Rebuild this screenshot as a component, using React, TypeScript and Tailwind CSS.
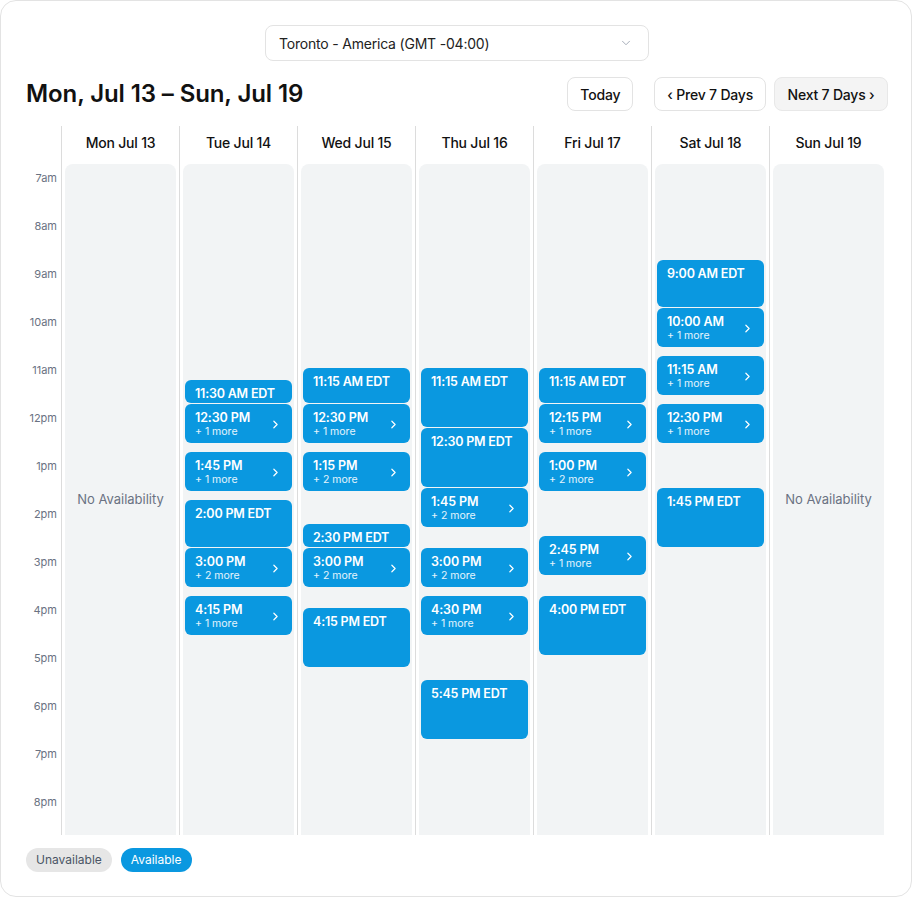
import React from 'react';
import { ChevronDown, ChevronRight } from 'lucide-react';

type Slot = { top: number; h: number; time: string; more?: string };

type Day = { label: string; slots: Slot[] | null };

const days: Day[] = [
  { label: 'Mon Jul 13', slots: null },
  {
    label: 'Tue Jul 14',
    slots: [
      { top: 216, h: 23, time: '11:30 AM EDT' },
      { top: 240, h: 39, time: '12:30 PM', more: '+ 1 more' },
      { top: 288, h: 39, time: '1:45 PM', more: '+ 1 more' },
      { top: 336, h: 47, time: '2:00 PM EDT' },
      { top: 384, h: 39, time: '3:00 PM', more: '+ 2 more' },
      { top: 432, h: 39, time: '4:15 PM', more: '+ 1 more' },
    ],
  },
  {
    label: 'Wed Jul 15',
    slots: [
      { top: 204, h: 35, time: '11:15 AM EDT' },
      { top: 240, h: 39, time: '12:30 PM', more: '+ 1 more' },
      { top: 288, h: 39, time: '1:15 PM', more: '+ 2 more' },
      { top: 360, h: 23, time: '2:30 PM EDT' },
      { top: 384, h: 39, time: '3:00 PM', more: '+ 2 more' },
      { top: 444, h: 59, time: '4:15 PM EDT' },
    ],
  },
  {
    label: 'Thu Jul 16',
    slots: [
      { top: 204, h: 59, time: '11:15 AM EDT' },
      { top: 264, h: 59, time: '12:30 PM EDT' },
      { top: 324, h: 39, time: '1:45 PM', more: '+ 2 more' },
      { top: 384, h: 39, time: '3:00 PM', more: '+ 2 more' },
      { top: 432, h: 39, time: '4:30 PM', more: '+ 1 more' },
      { top: 516, h: 59, time: '5:45 PM EDT' },
    ],
  },
  {
    label: 'Fri Jul 17',
    slots: [
      { top: 204, h: 35, time: '11:15 AM EDT' },
      { top: 240, h: 39, time: '12:15 PM', more: '+ 1 more' },
      { top: 288, h: 39, time: '1:00 PM', more: '+ 2 more' },
      { top: 372, h: 39, time: '2:45 PM', more: '+ 1 more' },
      { top: 432, h: 59, time: '4:00 PM EDT' },
    ],
  },
  {
    label: 'Sat Jul 18',
    slots: [
      { top: 96, h: 47, time: '9:00 AM EDT' },
      { top: 144, h: 39, time: '10:00 AM', more: '+ 1 more' },
      { top: 192, h: 39, time: '11:15 AM', more: '+ 1 more' },
      { top: 240, h: 39, time: '12:30 PM', more: '+ 1 more' },
      { top: 324, h: 59, time: '1:45 PM EDT' },
    ],
  },
  { label: 'Sun Jul 19', slots: null },
];

const hours = ['7am', '8am', '9am', '10am', '11am', '12pm', '1pm', '2pm', '3pm', '4pm', '5pm', '6pm', '7pm', '8pm'];

function SlotCard({ slot }: { slot: Slot }) {
  return (
    <div
      className="absolute left-[2px] right-[2px] overflow-hidden whitespace-nowrap rounded-md bg-[#0a98e0] pl-[10px] pr-[10px] pt-[6px] text-white"
      style={{ top: slot.top, height: slot.h }}
    >
      {slot.more ? (
        <div className="flex items-center justify-between">
          <div>
            <div className="text-[12.5px] font-semibold leading-[15px] tracking-[-0.1px]">{slot.time}</div>
            <div className="text-[10.5px] leading-[14px] text-white/90">{slot.more}</div>
          </div>
          <ChevronRight size={13} strokeWidth={2.25} />
        </div>
      ) : (
        <div className="text-[12.5px] font-semibold leading-[15px] tracking-[-0.2px]">{slot.time}</div>
      )}
    </div>
  );
}

export default function App() {
  return (
    <div className="h-[897px] w-[913px] bg-white font-['Inter',sans-serif] text-[#111]">
      <div className="flex h-[897px] w-[912px] flex-col rounded-2xl border border-[#e3e3e3] pb-6 pl-[25px] pr-[23px] pt-6">
        <div className="flex justify-center">
          <div className="flex h-9 w-[384px] items-center justify-between rounded-lg border border-[#e3e3e3] pl-[13px] pr-[15px] text-[14px] text-[#222]">
            <span className="tracking-[-0.2px]">Toronto - America (GMT -04:00)</span>
            <ChevronDown size={14} strokeWidth={1.5} className="text-gray-400" />
          </div>
        </div>

        <div className="mt-4 flex h-[34px] items-center">
          <h1 className="flex-1 text-[24px] font-semibold tracking-[-0.1px]">Mon, Jul 13 – Sun, Jul 19</h1>
          <button className="h-[34px] rounded-lg border border-[#e3e3e3] px-[12px] text-[14px] font-medium tracking-[-0.2px]">Today</button>
          <button className="ml-[21px] h-[34px] rounded-lg border border-[#e3e3e3] px-[12px] text-[14px] font-medium tracking-[-0.2px]">‹ Prev 7 Days</button>
          <button className="ml-2 h-[34px] rounded-lg border border-[#e8e8e8] bg-[#f4f4f4] px-[12.5px] text-[14px] font-medium tracking-[-0.2px]">Next 7 Days ›</button>
        </div>

        <div className="mt-[15px] flex">
          <div className="w-[35px] shrink-0">
            <div className="h-[38px]" />
            <div className="relative h-[671px]">
              {hours.map((h, i) => (
                <div
                  key={h}
                  className="absolute right-[4px] text-[11px] leading-[12px] text-gray-500"
                  style={{ top: i * 48 + 8 }}
                >
                  {h}
                </div>
              ))}
            </div>
          </div>
          {days.map((d) => (
            <div key={d.label} className="w-[118px] shrink-0 border-l border-[#dcdcdc]">
              <div className="flex h-[38px] items-center justify-center pb-[6px] text-[14px] font-medium tracking-[-0.2px]">
                {d.label}
              </div>
              <div className="h-[671px] overflow-hidden pl-[3px] pr-[3px]">
                <div className="relative h-[700px] rounded-t-lg bg-[#f2f4f5]">
                  {d.slots ? (
                    d.slots.map((s) => <SlotCard key={s.time + s.top} slot={s} />)
                  ) : (
                    <div className="flex h-[671px] items-center justify-center text-[13px] text-gray-500">
                      No Availability
                    </div>
                  )}
                </div>
              </div>
            </div>
          ))}
        </div>

        <div className="mt-[13px] flex gap-[9px]">
          <span className="rounded-full bg-[#e6e6e6] px-[10px] py-[4px] text-[12px] leading-[16px] text-gray-600">Unavailable</span>
          <span className="rounded-full bg-[#0a98e0] px-[10px] py-[4px] text-[12px] leading-[16px] text-white">Available</span>
        </div>
      </div>
    </div>
  );
}
